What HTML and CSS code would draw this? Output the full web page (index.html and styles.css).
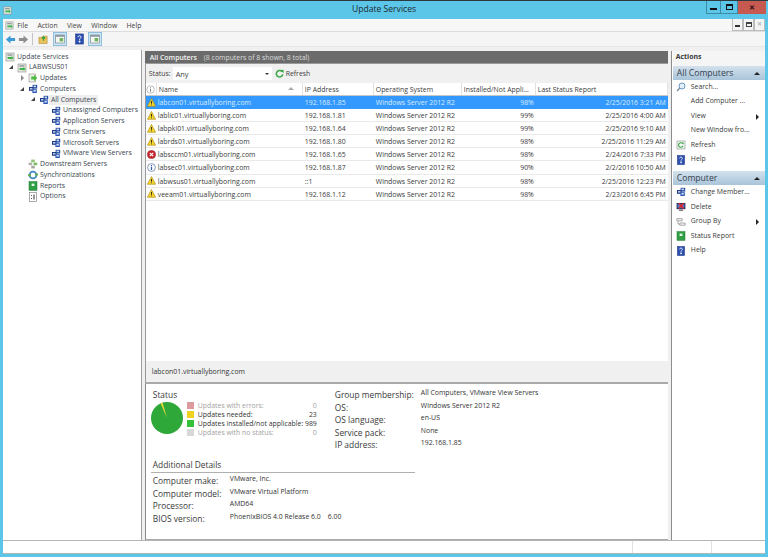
FILE: index.html
```html
<!DOCTYPE html>
<html lang="en">
<head>
<meta charset="utf-8">
<title>Update Services</title>
<link rel="stylesheet" href="styles.css">
</head>
<body>
<svg class="defs" aria-hidden="true">
  <symbol id="warn" viewBox="0 0 10 10"><path d="M5 .6 9.6 9.2H.4Z" fill="#f6d32d" stroke="#a98a12" stroke-width=".7"/><path d="M4.5 3.3h1v3.2h-1zM4.5 7.1h1v1h-1z" fill="#222"/></symbol>
  <symbol id="err" viewBox="0 0 10 10"><circle cx="5" cy="5" r="4.5" fill="#c8262c" stroke="#8c1a1f" stroke-width=".6"/><path d="M3.1 3.1 6.9 6.9M6.9 3.1 3.1 6.9" stroke="#fff" stroke-width="1.3"/></symbol>
  <symbol id="info" viewBox="0 0 10 10"><circle cx="5" cy="5" r="4.4" fill="#f4f6fb" stroke="#6a7fa8" stroke-width=".8"/><path d="M4.4 2.2h1.2v1.1H4.4zM4.4 4.1h1.2v3.7H4.4z" fill="#2c58a8"/></symbol>
  <symbol id="infog" viewBox="0 0 10 10"><circle cx="5" cy="5" r="4.2" fill="#fff" stroke="#999" stroke-width=".7"/><path d="M4.5 2.4h1v1h-1zM4.5 4.2h1v3.4h-1z" fill="#777"/></symbol>
  <symbol id="group" viewBox="0 0 10 10"><rect x="4.6" y=".8" width="4.6" height="3.8" fill="#2b4fa8"/><rect x="1" y="3" width="4.6" height="3.8" fill="#1f3c8c"/><rect x="4.4" y="5.2" width="4.4" height="3.8" fill="#2b55b8"/><rect x="2" y="4" width="2.4" height="1.6" fill="#bcd"/><rect x="5.6" y="1.6" width="2.4" height="1.6" fill="#cde"/><rect x="5.4" y="6" width="2.4" height="1.6" fill="#cde"/></symbol>
  <symbol id="server" viewBox="0 0 10 10"><rect x="1" y="1" width="8" height="8" fill="#e8e8e4" stroke="#8a8a84" stroke-width=".6"/><rect x="2.4" y="2.4" width="5" height="1.2" fill="#7c8a90"/><path d="M2.6 5h4v-1l2 2-2 2V7h-4z" fill="#3eb54a"/></symbol>
  <symbol id="updates" viewBox="0 0 10 10"><rect x="1" y="1" width="6.4" height="8" fill="#eef0ea" stroke="#8f938a" stroke-width=".6"/><path d="M3.2 3.6h3v-2l3 3.4-3 3.4v-2h-3z" fill="#4dbb3f"/></symbol>
  <symbol id="down" viewBox="0 0 10 10"><rect x="3.2" y=".6" width="3.6" height="2.6" fill="#8fc37a"/><rect x=".6" y="3.6" width="3.6" height="2.6" fill="#b0b0a8"/><rect x="5.6" y="3.6" width="3.6" height="2.6" fill="#7dbb62"/><rect x="3.2" y="6.8" width="3.6" height="2.6" fill="#a3a89c"/></symbol>
  <symbol id="sync" viewBox="0 0 10 10"><circle cx="5" cy="5" r="3.4" fill="none" stroke="#3f87c8" stroke-width="1.8"/><path d="M0 4.2h3v2H0zM7 3.4h3v2H7z" fill="#62b04a"/></symbol>
  <symbol id="report" viewBox="0 0 10 10"><rect x="1" y=".6" width="8" height="8.8" fill="#2f9e45" stroke="#1e7a33" stroke-width=".5"/><rect x="3.6" y="2.6" width="2.8" height="2.4" fill="#e6f6e6"/></symbol>
  <symbol id="options" viewBox="0 0 10 10"><rect x="1.5" y=".6" width="7" height="8.8" fill="#fff" stroke="#888" stroke-width=".7"/><path d="M3 3h1v1H3zM3 6h1v1H3zM5.4 2.6h1.2v5H5.4z" fill="#555"/></symbol>
  <symbol id="refresh" viewBox="0 0 10 10"><path d="M8 3.2A3.6 3.6 0 1 0 8.6 6" fill="none" stroke="#37a745" stroke-width="1.7"/><path d="M6 .8 9.6 1v3.6z" fill="#37a745"/></symbol>
  <symbol id="refpage" viewBox="0 0 10 10"><rect x="1" y="1" width="8" height="8" fill="#f3f6f2" stroke="#8a908a" stroke-width=".6"/><path d="M6.8 3.8A2.3 2.3 0 1 0 7 5.8" fill="none" stroke="#37a745" stroke-width="1.1"/><path d="M5.6 2.6 7.6 2.6V4.6z" fill="#37a745"/></symbol>
  <symbol id="help" viewBox="0 0 10 10"><rect x="1.4" y=".4" width="7.2" height="9.2" fill="#2d4fb0" stroke="#1e3580" stroke-width=".5"/><path d="M3.6 3.4Q3.8 2 5 2T6.4 3.3C6.4 4.4 5 4.4 5 5.8M4.6 6.8h.9v1h-.9z" fill="none" stroke="#fff" stroke-width=".8"/></symbol>
  <symbol id="search" viewBox="0 0 10 10"><circle cx="6" cy="4" r="3" fill="#e3f0fa" stroke="#5d8fb8" stroke-width=".9"/><path d="M3.8 6.2 1 9" stroke="#6b7f90" stroke-width="1.2"/></symbol>
  <symbol id="delete" viewBox="0 0 10 10"><rect x=".6" y="1" width="8.8" height="6.2" fill="#22305e"/><rect x="1.6" y="2" width="6.8" height="4.2" fill="#5a78c8"/><rect x="3" y="7.6" width="4" height="1.4" fill="#777"/><path d="M2.8 1.2 7.6 6.6M7.6 1.2 2.8 6.6" stroke="#d8232a" stroke-width="1.5"/></symbol>
  <symbol id="groupby" viewBox="0 0 10 10"><path d="M.8 1.6h5.4v2.2H.8zM3.8 6h5.4v2.2H3.8z" fill="#f4f4f4" stroke="#8b8b8b" stroke-width=".7"/><path d="M2 3.8v3.3h1.8" fill="none" stroke="#8b8b8b" stroke-width=".7"/></symbol>
  <symbol id="panel" viewBox="0 0 14 14"><rect x=".5" y=".5" width="13" height="13" fill="#cfe6f5" stroke="#8fbfdc"/><rect x="2.5" y="3" width="9" height="8" fill="#f6f6f2" stroke="#7d8a92" stroke-width=".7"/><rect x="2.5" y="3" width="9" height="1.8" fill="#8a9aa5"/><rect x="6.6" y="6" width="3.6" height="3.4" fill="#6db55e"/></symbol>
  <symbol id="folder" viewBox="0 0 12 12"><path d="M1 3.6h3.4l1-1.2H10V10.4H1z" fill="#e9c35c" stroke="#a78a33" stroke-width=".6"/><path d="M6 7.4V3.4M4.2 5 6 3l1.8 2" fill="none" stroke="#3aa143" stroke-width="1.4"/></symbol>
  <symbol id="back" viewBox="0 0 12 12"><path d="M1 6 6 1.6v2.8h5v3.2H6v2.8z" fill="#3c9ad8"/></symbol>
  <symbol id="fwd" viewBox="0 0 12 12"><path d="M11 6 6 1.6v2.8H1v3.2h5v2.8z" fill="#8d8d8d"/></symbol>
</svg>

<header class="titlebar">
  <svg class="title-icon"><use href="#server"/></svg>
  <div class="title-text">Update Services</div>
  <div class="win-btns">
    <div class="wb wb-min"><span class="glyph-min"></span></div>
    <div class="wb wb-max"><span class="glyph-max"></span></div>
    <div class="wb wb-close">&#10005;</div>
  </div>
</header>

<div class="window">
  <nav class="menubar">
    <svg class="menu-icon"><use href="#server"/></svg>
    <span>File</span><span>Action</span><span>View</span><span>Window</span><span>Help</span>
    <div class="mdi">
      <div class="mb"><span class="glyph-min small"></span></div>
      <div class="mb"><span class="glyph-max small"></span></div>
      <div class="mb dim">&#10005;</div>
    </div>
  </nav>
  <div class="toolbar">
    <svg class="tb"><use href="#back"/></svg>
    <svg class="tb"><use href="#fwd"/></svg>
    <span class="tb-sep"></span>
    <svg class="tb"><use href="#folder"/></svg>
    <svg class="tb-p"><use href="#panel"/></svg>
    <svg class="tb-h"><use href="#help"/></svg>
    <svg class="tb-p"><use href="#panel"/></svg>
  </div>

  <div class="main">
    <aside class="tree">
      <div class="node"><svg class="ti"><use href="#server"/></svg>Update Services</div>
      <div class="node l1"><i class="exp open"></i><svg class="ti"><use href="#server"/></svg>LABWSUS01</div>
      <div class="node l2"><i class="exp closed"></i><svg class="ti"><use href="#updates"/></svg>Updates</div>
      <div class="node l2"><i class="exp open"></i><svg class="ti"><use href="#group"/></svg>Computers</div>
      <div class="node l3"><i class="exp open"></i><svg class="ti"><use href="#group"/></svg><span class="sel">All Computers</span></div>
      <div class="node l4"><svg class="ti"><use href="#group"/></svg>Unassigned Computers</div>
      <div class="node l4"><svg class="ti"><use href="#group"/></svg>Application Servers</div>
      <div class="node l4"><svg class="ti"><use href="#group"/></svg>Citrix Servers</div>
      <div class="node l4"><svg class="ti"><use href="#group"/></svg>Microsoft Servers</div>
      <div class="node l4"><svg class="ti"><use href="#group"/></svg>VMware View Servers</div>
      <div class="node l2"><i class="exp"></i><svg class="ti"><use href="#down"/></svg>Downstream Servers</div>
      <div class="node l2"><i class="exp"></i><svg class="ti"><use href="#sync"/></svg>Synchronizations</div>
      <div class="node l2"><i class="exp"></i><svg class="ti"><use href="#report"/></svg>Reports</div>
      <div class="node l2"><i class="exp"></i><svg class="ti"><use href="#options"/></svg>Options</div>
    </aside>

    <section class="center">
      <div class="band"><b>All Computers</b><span>(8 computers of 8 shown, 8 total)</span></div>
      <div class="filter">
        <span>Status:</span>
        <div class="select"><span>Any</span><i class="caret"></i></div>
        <svg class="ref-ic"><use href="#refresh"/></svg>
        <span>Refresh</span>
      </div>
      <div class="grid-wrap">
        <div class="row head">
          <div class="c0"><svg class="ri"><use href="#infog"/></svg></div>
          <div class="c1">Name<i class="sort"></i></div>
          <div class="c2">IP Address</div>
          <div class="c3">Operating System</div>
          <div class="c4">Installed/Not Appli...</div>
          <div class="c5">Last Status Report</div>
        </div>
        <div class="row active">
          <div class="c0"><svg class="ri"><use href="#warn"/></svg></div><div class="c1">labcon01.virtuallyboring.com</div><div class="c2">192.168.1.85</div><div class="c3">Windows Server 2012 R2</div><div class="c4 r">98%</div><div class="c5 r">2/25/2016 3:21 AM</div>
        </div>
        <div class="row">
          <div class="c0"><svg class="ri"><use href="#warn"/></svg></div><div class="c1">lablic01.virtuallyboring.com</div><div class="c2">192.168.1.81</div><div class="c3">Windows Server 2012 R2</div><div class="c4 r">99%</div><div class="c5 r">2/25/2016 4:00 AM</div>
        </div>
        <div class="row">
          <div class="c0"><svg class="ri"><use href="#warn"/></svg></div><div class="c1">labpki01.virtuallyboring.com</div><div class="c2">192.168.1.64</div><div class="c3">Windows Server 2012 R2</div><div class="c4 r">99%</div><div class="c5 r">2/25/2016 9:10 AM</div>
        </div>
        <div class="row">
          <div class="c0"><svg class="ri"><use href="#warn"/></svg></div><div class="c1">labrds01.virtuallyboring.com</div><div class="c2">192.168.1.80</div><div class="c3">Windows Server 2012 R2</div><div class="c4 r">98%</div><div class="c5 r">2/25/2016 11:29 AM</div>
        </div>
        <div class="row">
          <div class="c0"><svg class="ri"><use href="#err"/></svg></div><div class="c1">labsccm01.virtuallyboring.com</div><div class="c2">192.168.1.65</div><div class="c3">Windows Server 2012 R2</div><div class="c4 r">98%</div><div class="c5 r">2/24/2016 7:33 PM</div>
        </div>
        <div class="row">
          <div class="c0"><svg class="ri"><use href="#info"/></svg></div><div class="c1">labsec01.virtuallyboring.com</div><div class="c2">192.168.1.87</div><div class="c3">Windows Server 2012 R2</div><div class="c4 r">90%</div><div class="c5 r">2/2/2016 10:50 AM</div>
        </div>
        <div class="row">
          <div class="c0"><svg class="ri"><use href="#warn"/></svg></div><div class="c1">labwsus01.virtuallyboring.com</div><div class="c2">::1</div><div class="c3">Windows Server 2012 R2</div><div class="c4 r">98%</div><div class="c5 r">2/25/2016 12:23 PM</div>
        </div>
        <div class="row">
          <div class="c0"><svg class="ri"><use href="#warn"/></svg></div><div class="c1">veeam01.virtuallyboring.com</div><div class="c2">192.168.1.12</div><div class="c3">Windows Server 2012 R2</div><div class="c4 r">98%</div><div class="c5 r">2/23/2016 6:45 PM</div>
        </div>
      </div>
      <div class="detail-title">labcon01.virtuallyboring.com</div>
      <div class="detail">
        <div class="detail-top">
          <div class="status">
            <div class="heading">Status</div>
            <div class="status-body">
              <svg class="pie" viewBox="0 0 32 32">
                <circle cx="16" cy="16" r="16" fill="#2fa83a"/>
                <path d="M16 16 9.6 1.4A16 16 0 0 1 11.6 .6Z" fill="#e3d43a"/>
              </svg>
              <div class="legend">
                <div class="lg off"><i class="sw sw-r"></i><span>Updates with errors:</span><em>0</em></div>
                <div class="lg"><i class="sw sw-y"></i><span>Updates needed:</span><em>23</em></div>
                <div class="lg"><i class="sw sw-g"></i><span>Updates installed/not applicable:</span><em>989</em></div>
                <div class="lg off"><i class="sw sw-n"></i><span>Updates with no status:</span><em>0</em></div>
              </div>
            </div>
          </div>
          <div class="props">
            <div class="plabel">Group membership:</div><div class="pval">All Computers, VMware View Servers</div>
            <div class="plabel">OS:</div><div class="pval">Windows Server 2012 R2</div>
            <div class="plabel">OS language:</div><div class="pval">en-US</div>
            <div class="plabel">Service pack:</div><div class="pval">None</div>
            <div class="plabel">IP address:</div><div class="pval">192.168.1.85</div>
          </div>
        </div>
        <div class="additional">
          <div class="heading rule">Additional Details</div>
          <div class="add-grid">
            <div class="plabel">Computer make:</div><div class="pval">VMware, Inc.</div>
            <div class="plabel">Computer model:</div><div class="pval">VMware Virtual Platform</div>
            <div class="plabel">Processor:</div><div class="pval">AMD64</div>
            <div class="plabel">BIOS version:</div><div class="pval bios"><span>PhoenixBIOS 4.0 Release 6.0</span><span>6.00</span></div>
          </div>
        </div>
      </div>
    </section>

    <aside class="actions">
      <div class="act-title">Actions</div>
      <div class="act-head">All Computers<i class="up"></i></div>
      <div class="act"><svg class="ai"><use href="#search"/></svg>Search...</div>
      <div class="act"><span class="ai"></span>Add Computer ...</div>
      <div class="act"><span class="ai"></span>View<i class="more"></i></div>
      <div class="act"><span class="ai"></span>New Window fro...</div>
      <div class="act"><svg class="ai"><use href="#refpage"/></svg>Refresh</div>
      <div class="act"><svg class="ai"><use href="#help"/></svg>Help</div>
      <div class="act-head second">Computer<i class="up"></i></div>
      <div class="act"><svg class="ai"><use href="#group"/></svg>Change Member...</div>
      <div class="act"><svg class="ai"><use href="#delete"/></svg>Delete</div>
      <div class="act"><svg class="ai"><use href="#groupby"/></svg>Group By<i class="more"></i></div>
      <div class="act"><svg class="ai"><use href="#report"/></svg>Status Report</div>
      <div class="act"><svg class="ai"><use href="#help"/></svg>Help</div>
    </aside>
  </div>

  <footer class="statusbar"><div class="s1"></div><div class="s2"></div><div class="s3"></div></footer>
</div>
</body>
</html>
```
FILE: styles.css
```css
* { box-sizing: border-box; }
html, body { margin: 0; height: 100%; }
body {
  width: 768px; height: 557px; overflow: hidden;
  background: #5cc6e8;
  font-family: "Open Sans", "Noto Sans", sans-serif;
  font-size: 6.9px; color: #303030;
}
.defs { width: 0; height: 0; display: block; position: absolute; }

.titlebar { height: 19px; border-top: 1px solid #2c3a40; display: flex; align-items: flex-start; }
.title-icon { width: 9px; height: 9px; margin: 5px 0 0 3px; }
.title-text { flex: 1; text-align: center; font-size: 8.6px; color: #1d2a30; line-height: 17px; padding-left: 50px; }
.win-btns { display: flex; margin-right: 2px; height: 13px; }
.wb { height: 13px; display: flex; align-items: center; justify-content: center; border: 1px solid #3d8aa6; border-top: 0; color: #2a1010; }
.wb-min { width: 15px; }
.wb-max { width: 17px; border-left: 0; }
.wb-close { width: 28px; background: #c75a50; border: 0; font-size: 7px; font-weight: 700; }
.glyph-min { width: 7px; height: 2px; background: #111; margin-top: 3px; }
.glyph-max { width: 7px; height: 6px; border: 1px solid #111; border-top-width: 2px; }
.glyph-min.small { width: 5px; margin-top: 3px; background: #333; }
.glyph-max.small { width: 6px; height: 5px; border-color: #444; }

.window { margin: 0 3px; height: 535px; background: #f5f5f5; display: flex; flex-direction: column; }

.menubar { height: 13px; display: flex; align-items: center; gap: 9.25px; padding-left: 2px; color: #444; background: #f7f7f7; border-bottom: 1px solid #ddd; }
.menu-icon { width: 9px; height: 9px; margin-right: -6px; }
.mdi { margin-left: auto; display: flex; height: 13px; }
.mb { width: 11px; height: 12px; border: 1px solid #bbb; border-top: 0; display: flex; align-items: center; justify-content: center; background: #f4f4f4; }
.mb.dim { color: #a9b6bd; font-size: 6px; font-weight: 700; }

.toolbar { height: 15px; display: flex; align-items: center; padding-left: 2px; background: #f5f5f5; border-bottom: 1px solid #e6e6e6; }
.tb { width: 11px; height: 11px; margin-right: 2px; }
.tb-sep { width: 1px; height: 12px; background: #c4c4c4; margin: 0 5px 0 1px; }
.tb-p { width: 14px; height: 14px; margin-left: 2px; }
.tb-h { width: 11px; height: 12px; margin-left: 7px; margin-right: 1px; }

.main { height: 493px; display: flex; background: #f0f0f0; }

.tree { width: 140px; margin-top: 3px; background: #fff; border-right: 1px solid #a0a0a0; padding-top: 1.5px; color: #3a4650; }
.node { height: 10.75px; line-height: 10.75px; display: flex; align-items: center; padding-left: 2px; white-space: nowrap; }
.l1 { padding-left: 5px; }
.l2 { padding-left: 16px; }
.l3 { padding-left: 27px; }
.l4 { padding-left: 48px; }
.exp { width: 7px; height: 7px; flex: none; margin-right: 2px; position: relative; }
.exp.open::after { content: ""; position: absolute; left: 1px; top: 1px; border-style: solid; border-width: 0 0 4px 4px; border-color: transparent transparent #444 transparent; }
.exp.closed::after { content: ""; position: absolute; left: 2px; top: 0; border-style: solid; border-width: 3px 0 3px 3px; border-color: transparent transparent transparent #888; }
.ti { width: 10px; height: 10px; flex: none; margin-right: 2px; }
.sel { background: #eeeeee; padding: 0 2px; margin-left: -2px; }

.center { width: 523px; margin-left: 3px; margin-top: 4px; display: flex; flex-direction: column; background: #fff; }
.band { height: 13px; flex: none; background: #6b6b6b; color: #f4f4f4; line-height: 13px; padding-left: 5px; white-space: nowrap; border-bottom: 1px solid #9a9a9a; }
.band b { font-weight: 600; }
.band span { margin-left: 7px; color: #dcdcdc; }
.filter { height: 19px; flex: none; background: #f0f0f0; display: flex; align-items: center; padding-left: 3px; border-left: 1px solid #999; color: #404040; }
.select { width: 99px; height: 13px; background: #fff; margin-left: 2px; display: flex; align-items: center; justify-content: space-between; padding: 0 3px; font-size: 7.4px; }
.caret { border-style: solid; border-width: 2px 2px 0; border-color: #333 transparent transparent; }
.ref-ic { width: 9px; height: 9px; margin: 0 2px 0 3px; }

.grid-wrap { flex: none; height: 278px; border-left: 1px solid #999; background: #fff; }
.row { display: flex; height: 13.1px; line-height: 13px; border-bottom: 1px solid #e9e9e9; white-space: nowrap; color: #3a3a3a; }
.row.head { height: 13px; border-bottom: 1px solid #c6c6c6; color: #404040; background: #fff; }
.row.head > div { border-right: 1px solid #e2e2e2; padding-left: 2px; }
.row.head .c0 { padding-left: 0; }
.row.active { background: #3399ff; color: #dcecfb; border-bottom-color: #3399ff; }
.c0 { width: 11px; display: flex; align-items: center; justify-content: center; flex: none; }
.c1 { width: 146px; padding-left: 1px; flex: none; position: relative; }
.c2 { width: 71px; padding-left: 2px; flex: none; }
.c3 { width: 88px; padding-left: 2px; flex: none; }
.c4 { width: 74px; padding-left: 2px; flex: none; }
.c5 { width: 132px; padding-left: 2px; flex: none; }
.c4.r { padding-right: 2px; text-align: right; }
.c5.r { padding-right: 2px; text-align: right; }
.ri { width: 9px; height: 9px; }
.sort { position: absolute; right: 8px; top: 4px; border-style: solid; border-width: 0 3px 3px; border-color: transparent transparent #aaa; }

.detail-title { height: 23px; flex: none; background: #f0f0f0; line-height: 22px; padding-left: 6px; border-bottom: 2px solid #a9a9a9; border-left: 1px solid #999; color: #333; }
.detail { flex: 1; border-left: 1px solid #888; border-bottom: 1px solid #aaa; padding: 5px 0 0 5px; background: #fff; }
.detail-top { display: flex; height: 70px; }
.status { width: 184px; }
.heading { font-size: 8.4px; line-height: 12px; color: #3a3a3a; padding-left: 2px; }
.status-body { display: flex; }
.pie { width: 32px; height: 32px; flex: none; margin-top: 1px; margin-left: 0; }
.legend { width: 130px; margin-left: 4px; }
.lg { height: 9px; line-height: 9px; display: flex; align-items: center; color: #333; font-weight: 500; }
.lg.off { color: #a2a2a2; font-weight: 400; }
.lg span { flex: 1; white-space: nowrap; }
.lg em { font-style: normal; }
.sw { width: 7px; height: 7px; flex: none; margin-right: 4px; }
.sw-r { background: #dc9aa0; }
.sw-y { background: #eed21f; }
.sw-g { background: #35c13a; }
.sw-n { background: #d8d8d8; }
.props { display: grid; grid-template-columns: 86px auto; grid-auto-rows: 12.5px; }
.plabel { font-size: 8.4px; line-height: 12.5px; color: #3a3a3a; white-space: nowrap; }
.pval { line-height: 10px; margin-top: -1px; color: #333; white-space: nowrap; }
.rule { width: 264px; border-bottom: 1px solid #b0b0b0; height: 14px; line-height: 12px; }
.add-grid { display: grid; grid-template-columns: 77px auto; grid-auto-rows: 12.5px; padding-left: 2px; margin-top: 2px; }
.bios { display: flex; gap: 7px; }

.actions { width: 95px; margin-left: 3px; background: #fff; border-left: 1px solid #8c8c8c; padding-left: 1px; margin-top: 4px; color: #3a3a3a; }
.act-title { height: 14.5px; font-weight: 700; line-height: 12px; padding-left: 3px; background: #f5f5f5; }
.act-head { height: 14px; font-size: 8.6px; line-height: 14px; padding-left: 4px; background: linear-gradient(#d3e1ec, #a9c4da); color: #33414d; position: relative; }
.act-head.second { margin-top: 4px; }
.up { position: absolute; right: 5px; top: 6px; border-style: solid; border-width: 0 3px 3px; border-color: transparent transparent #222; }
.act { height: 14.6px; line-height: 14.6px; display: flex; align-items: center; white-space: nowrap; padding-left: 3px; position: relative; }
.ai { width: 10px; height: 10px; flex: none; margin-right: 5px; }
.more { position: absolute; right: 6px; top: 5px; border-style: solid; border-width: 3px 0 3px 3px; border-color: transparent transparent transparent #222; }

.statusbar { height: 14px; display: flex; background: #fff; border-top: 1px solid #b5b5b5; border-bottom: 1px solid #b5b5b5; }
.s1 { width: 630px; border-right: 1px solid #e2e2e2; }
.s2 { width: 79px; border-right: 1px solid #e2e2e2; }
.s3 { flex: 1; }
```
